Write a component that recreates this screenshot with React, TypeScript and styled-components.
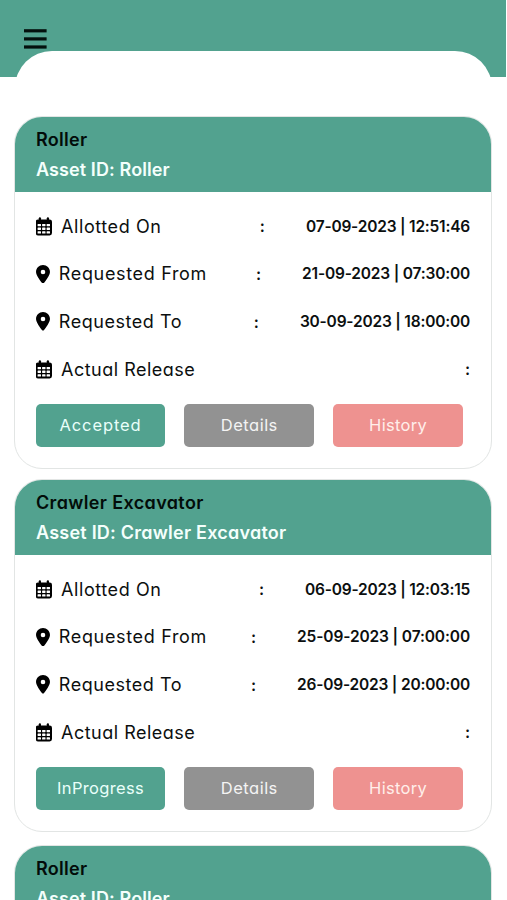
import React from "react";
import styled, { createGlobalStyle } from "styled-components";

const GREEN = "#52a28f";

const GlobalStyle = createGlobalStyle`
  * { box-sizing: border-box; }
  html, body { margin: 0; height: 100%; background: #fff; overflow: hidden; }
`;

const Screen = styled.div`
  height: 900px;
  overflow: hidden;
  background: #fff;
  color: #0c0f0f;
  font-family: Inter, "Open Sans", sans-serif;
  font-feature-settings: "cv11";
`;

const TopBar = styled.header`
  display: flex;
  flex-direction: column;
  width: 506px;
  height: 77px;
  padding: 29px 14px 0 15px;
  background: ${GREEN};
  overflow: hidden;
`;

const MenuButton = styled.button`
  display: flex;
  flex: none;
  width: 23px;
  height: 22px;
  margin: 0 0 0 8.5px;
  padding: 0;
  border: 0;
  background: none;
`;

const SheetTop = styled.div`
  flex: none;
  height: 60px;
  border-radius: 37px 37px 0 0;
  background: #fff;
`;

const CardList = styled.main`
  display: flex;
  flex-direction: column;
  padding: 39px 15px 0 14px;
`;

const Card = styled.article<{ $gap: number }>`
  flex: none;
  height: 353px;
  margin-bottom: ${(p) => p.$gap}px;
  border: 1px solid #e2e5e4;
  border-radius: 28px;
  background: #fff;
  overflow: hidden;
`;

const CardHead = styled.div`
  height: 75px;
  padding: 8px 21px 0;
  background: ${GREEN};
`;

const Title = styled.h2<{ $light?: boolean; $track: number }>`
  margin: 0;
  font-size: 18px;
  font-weight: 600;
  line-height: 29.7px;
  letter-spacing: ${(p) => p.$track}px;
  white-space: nowrap;
  color: ${(p) => (p.$light ? "#f4fffc" : "#020c09")};
`;

const Rows = styled.div`
  display: flex;
  flex-direction: column;
  padding: 10.2px 21px 0 20.5px;
`;

const Row = styled.div`
  display: flex;
  align-items: center;
  height: 47.8px;
`;

const IconBox = styled.span<{ $width: number }>`
  display: flex;
  flex: none;
  width: ${(p) => p.$width}px;
  color: #000;
`;

const Label = styled.span<{ $track: number }>`
  padding-top: 1px;
  font-size: 18px;
  line-height: 24px;
  letter-spacing: ${(p) => p.$track}px;
  white-space: nowrap;
`;

const Colon = styled.span`
  margin-left: auto;
  font-size: 16px;
  font-weight: 600;
  line-height: 24px;
`;

const Value = styled.span<{ $track: number }>`
  margin-left: 41px;
  padding-top: 1px;
  font-size: 15.5px;
  font-weight: 600;
  line-height: 24px;
  letter-spacing: ${(p) => p.$track}px;
  white-space: nowrap;
`;

const Actions = styled.div`
  display: grid;
  grid-template-columns: repeat(3, 129.7px);
  column-gap: 19.1px;
  padding: 10.6px 0 0 20.7px;
`;

const ActionButton = styled.button<{ $bg: string; $track: number; $ink: string }>`
  height: 42.7px;
  padding: 0;
  border: 0;
  border-radius: 5px;
  background: ${(p) => p.$bg};
  color: ${(p) => p.$ink};
  font: 400 16.5px/42px Inter, "Open Sans", sans-serif;
  font-feature-settings: inherit;
  letter-spacing: ${(p) => p.$track}px;
`;

type Text = { text: string; track: number };

type Line = { icon: "calendar" | "pin"; label: Text; value?: Text };

type Asset = { name: Text; assetId: Text; status?: Text; gap: number; dates?: Text[] };

const assets: Asset[] = [
  {
    name: { text: "Roller", track: 0.3 },
    assetId: { text: "Asset ID: Roller", track: 0.1 },
    status: { text: "Accepted", track: 0.88 },
    gap: 10,
    dates: [
      { text: "07-09-2023 | 12:51:46", track: -0.21 },
      { text: "21-09-2023 | 07:30:00", track: -0.19 },
      { text: "30-09-2023 | 18:00:00", track: -0.2 },
    ],
  },
  {
    name: { text: "Crawler Excavator", track: 0.36 },
    assetId: { text: "Asset ID: Crawler Excavator", track: 0.23 },
    status: { text: "InProgress", track: 0.33 },
    gap: 13,
    dates: [
      { text: "06-09-2023 | 12:03:15", track: -0.22 },
      { text: "25-09-2023 | 07:00:00", track: -0.12 },
      { text: "26-09-2023 | 20:00:00", track: -0.2 },
    ],
  },
  {
    name: { text: "Roller", track: 0.3 },
    assetId: { text: "Asset ID: Roller", track: 0.1 },
    gap: 0,
  },
];

const linesOf = (dates: Text[]): Line[] => [
  { icon: "calendar", label: { text: "Allotted On", track: 0.58 }, value: dates[0] },
  { icon: "pin", label: { text: "Requested From", track: 0.66 }, value: dates[1] },
  { icon: "pin", label: { text: "Requested To", track: 0.54 }, value: dates[2] },
  { icon: "calendar", label: { text: "Actual Release", track: 0.5 } },
];

function CalendarIcon() {
  return (
    <svg width="17" height="19" viewBox="0.8 0.3 17 19">
      <rect x="0.6" y="2.7" width="16.2" height="16" rx="2.4" fill="#000" />
      <rect x="3.6" y="0.5" width="2.2" height="4" rx="1.1" fill="#000" />
      <rect x="11.6" y="0.5" width="2.2" height="4" rx="1.1" fill="#000" />
      <g fill="#fff">
        {[7.2, 10.9, 14.6].map((y) =>
          [2.4, 6.9, 11.4].map((x) => (
            <rect key={`${x}-${y}`} x={x} y={y} width="3.4" height="2.3" rx="0.4" />
          )),
        )}
      </g>
    </svg>
  );
}

function PinIcon() {
  return (
    <svg width="14" height="18.6" viewBox="0 0 384 512" fill="currentColor">
      <path d="M215.7 499.2C267 435 384 279.4 384 192C384 86 298 0 192 0S0 86 0 192c0 87.400 117 243 168.300 307.200c12.300 15.300 35.100 15.300 47.400 0zM192 128a64 64 0 1 1 0 128 64 64 0 1 1 0-128z" />
    </svg>
  );
}

function AssetCard({ asset }: { asset: Asset }) {
  return (
    <Card $gap={asset.gap}>
      <CardHead>
        <Title $track={asset.name.track}>{asset.name.text}</Title>
        <Title as="h3" $light $track={asset.assetId.track}>
          {asset.assetId.text}
        </Title>
      </CardHead>
      {asset.dates && (
        <Rows>
          {linesOf(asset.dates).map((line) => (
            <Row key={line.label.text}>
              <IconBox $width={line.icon === "calendar" ? 25.5 : 23.3}>
                {line.icon === "calendar" ? <CalendarIcon /> : <PinIcon />}
              </IconBox>
              <Label $track={line.label.track}>{line.label.text}</Label>
              <Colon>:</Colon>
              {line.value && <Value $track={line.value.track}>{line.value.text}</Value>}
            </Row>
          ))}
        </Rows>
      )}
      {asset.status && (
        <Actions>
          <ActionButton $bg={GREEN} $ink="#e9fffa" $track={asset.status.track}>
            {asset.status.text}
          </ActionButton>
          <ActionButton $bg="#929292" $ink="#f4f4f4" $track={0.49}>
            Details
          </ActionButton>
          <ActionButton $bg="#ee9290" $ink="#ffeeea" $track={0.31}>
            History
          </ActionButton>
        </Actions>
      )}
    </Card>
  );
}

export default function App() {
  return (
    <Screen>
      <GlobalStyle />
      <TopBar>
        <MenuButton aria-label="Menu">
          <svg width="23" height="20" viewBox="0 0 23 20" fill="#03100d">
            <rect y="0.2" width="22.6" height="3.2" />
            <rect y="8.3" width="22.6" height="3.2" />
            <rect y="16.4" width="22.6" height="3.2" />
          </svg>
        </MenuButton>
        <SheetTop />
      </TopBar>
      <CardList>
        {assets.map((asset, i) => (
          <AssetCard key={i} asset={asset} />
        ))}
      </CardList>
    </Screen>
  );
}
